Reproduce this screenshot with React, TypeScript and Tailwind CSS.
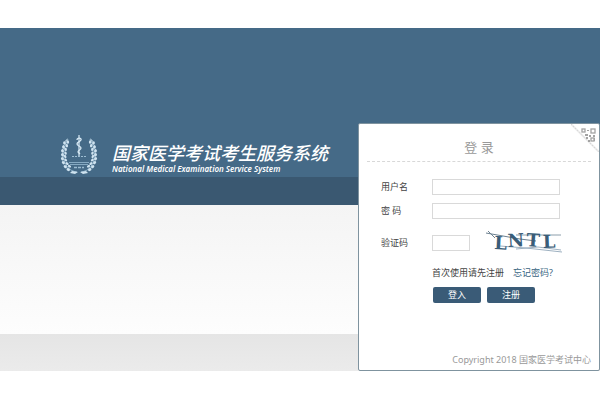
import React, { FormEvent, useState } from "react";

const LEAVES = [
  { x: 4, y: 8, angle: -5 },
  { x: 3, y: 12, angle: -10 },
  { x: 2, y: 16, angle: -15 },
  { x: 2, y: 20, angle: -20 },
  { x: 2, y: 24, angle: -30 },
  { x: 3, y: 28, angle: -40 },
  { x: 5, y: 32, angle: -50 },
  { x: 8, y: 35, angle: -60 },
];

function WheatBranch() {
  return (
    <g>
      <path d="M8 4 C4 12 3 18 4 25 C6 31 9 36 17 37" fill="none" stroke="#8fb3cb" strokeWidth="1" />
      {LEAVES.map(({ x, y, angle }) => (
        <g key={y} transform={`translate(${x} ${y}) rotate(${angle})`}>
          <ellipse cx="0.5" cy="0" rx="1.4" ry="1.8" />
          <ellipse cx="4" cy="-0.6" rx="1.2" ry="1.7" />
        </g>
      ))}
      <path d="M8 3 L6 7 L5 6 Z" />
      <path d="M12 36 L18 37 L15 39 L10 38 Z" />
    </g>
  );
}

function Emblem() {
  return (
    <svg viewBox="0 0 38 40" className="h-10 w-[38px] shrink-0 fill-[#cfe3f0]" aria-hidden="true">
      <WheatBranch />
      <g transform="translate(38 0) scale(-1 1)">
        <WheatBranch />
      </g>
      {/* staff and snake */}
      <path d="M19 0 V21" stroke="#d8eaf5" strokeWidth="1.2" />
      <path
        d="M17 5 C17 2 22 3 21 5 C20 7 17 7 17 9 C17 11 21 11 21 13 C21 15 18 15 18 17 L20 19"
        fill="none"
        stroke="#d8eaf5"
        strokeWidth="1.3"
      />
      <path d="M12 21.5 H26" stroke="#9dbdd2" strokeWidth="1" strokeDasharray="2 1" />
      <path d="M9 27.5 H29 M10 29.5 H28" stroke="#86aac3" strokeWidth="1.2" />
      <path d="M14 32.5 H24" stroke="#9dbdd2" strokeWidth="1.4" strokeDasharray="3 1" />
    </svg>
  );
}

function QrCorner() {
  return (
    <svg viewBox="0 0 28 28" className="h-7 w-7" aria-hidden="true">
      <path d="M0 0 L28 28" stroke="#ececec" strokeWidth="2" />
      <path d="M0 0 L28 28" stroke="#cfcfcf" strokeWidth="1" strokeDasharray="1 2" />
      <g fill="none" stroke="#a3a3a3" strokeWidth="1.3">
        <rect x="11" y="5" width="3" height="3" />
        <rect x="20" y="5" width="4" height="4" />
        <rect x="20" y="14" width="3" height="3" />
      </g>
      <path
        d="M16 6h2v1h-2z M14 10h3v2h-3z M18 11h2v2h-2z M22 11h2v2h-2z M15 13h2v2h-2z M17 16h2v2h-2z M23 14h1v3h-1z"
        fill="#a3a3a3"
      />
    </svg>
  );
}

function Captcha() {
  return (
    <svg viewBox="0 0 76 24" className="h-6 w-[76px] overflow-visible" role="img" aria-label="验证码">
      <path d="M2 0 L9 7 M0 2 L34 8 L50 10" fill="none" stroke="#6d8190" strokeWidth="1" />
      <path d="M30 4 H75" stroke="#8c9eab" strokeWidth="1" />
      <path d="M14 15 L40 17 L76 21 M30 18 L52 16 L75 19" fill="none" stroke="#9eb1c1" strokeWidth="1" />
      <text
        x="8 22 40 57"
        y="18 16 15 17"
        rotate="3 -3 4 -2"
        className="fill-[#3a5d78] font-['DejaVu_Serif',serif] text-[18px] font-bold"
      >
        LNTL
      </text>
    </svg>
  );
}

type FieldProps = {
  id: string;
  label: string;
  type?: string;
  value: string;
  onChange: (value: string) => void;
  short?: boolean;
  children?: React.ReactNode;
};

function Field({ id, label, type = "text", value, onChange, short, children }: FieldProps) {
  return (
    <div className="flex h-4 items-center">
      <label htmlFor={id} className="w-[51px] shrink-0 text-[#444]">
        {label}
      </label>
      <input
        id={id}
        type={type}
        value={value}
        onChange={(e) => onChange(e.target.value)}
        className={`h-4 border border-[#d9d9d9] bg-white px-1 outline-none focus:border-[#456a87] ${
          short ? "w-[38px]" : "w-32"
        }`}
      />
      {children}
    </div>
  );
}

function LoginCard() {
  const [username, setUsername] = useState<string>("");
  const [password, setPassword] = useState<string>("");
  const [code, setCode] = useState<string>("");

  const onSubmit = (e: FormEvent) => {
    e.preventDefault();
  };

  return (
    <section className="relative w-[242px] shrink-0 rounded-xs border border-[#7f939f] bg-white px-2">
      <div className="absolute top-0 right-0">
        <QrCorner />
      </div>

      <h2 className="border-b border-dashed border-[#d8d8d8] pt-[14px] pb-[5px] text-center text-[13px] leading-[18px] text-[#999]">
        登 录
      </h2>

      <form onSubmit={onSubmit} className="flex flex-col gap-2 pt-[17px] pl-[14px] text-[9px] leading-3">
        <Field id="username" label="用户名" value={username} onChange={setUsername} />
        <Field id="password" label="密 码" type="password" value={password} onChange={setPassword} />
        <div className="pt-2">
          <Field id="code" label="验证码" value={code} onChange={setCode} short>
            <span className="ml-4">
              <Captcha />
            </span>
          </Field>
        </div>

        <div className="mt-2 flex gap-[9px] pl-[51px] text-[#444]">
          <span>首次使用请先注册</span>
          <a href="#forgot" className="text-[#3a6582]">
            忘记密码?
          </a>
        </div>

        <div className="flex gap-[6px] pl-[52px] text-white">
          <button type="submit" className="h-4 w-12 rounded-xs bg-[#3a5b77]">
            登入
          </button>
          <button type="button" className="h-4 w-12 rounded-xs bg-[#3a5b77]">
            注册
          </button>
        </div>
      </form>

      <p className="pt-[51px] pb-1 text-right text-[9px] leading-3 text-[#999]">
        Copyright 2018 国家医学考试中心
      </p>
    </section>
  );
}

export default function App() {
  return (
    <main className="grid bg-white py-7 font-['Noto_Sans','Noto_Sans_CJK_SC',sans-serif]">
      {/* Background bands */}
      <div className="col-start-1 row-start-1 flex flex-col">
        <div className="h-[149px] bg-[#456a87]" />
        <div className="h-7 bg-[#3a5871]" />
        <div className="flex-1 bg-linear-to-b from-[#f4f4f4] to-[#fdfdfd]" />
        <div className="h-[37px] bg-linear-to-b from-[#e5e5e5] to-[#ebebeb]" />
      </div>

      {/* Brand and login */}
      <div className="col-start-1 row-start-1 flex justify-between pt-[95px]">
        <header className="flex items-start gap-[14px] pt-3 pl-[60px] text-white italic">
          <Emblem />
          <div className="pt-2 whitespace-nowrap">
            <h1 className="text-[18px] leading-5 font-medium">国家医学考试考生服务系统</h1>
            <p className="text-[8px] leading-3 font-semibold">National Medical Examination Service System</p>
          </div>
        </header>
        <LoginCard />
      </div>
    </main>
  );
}
